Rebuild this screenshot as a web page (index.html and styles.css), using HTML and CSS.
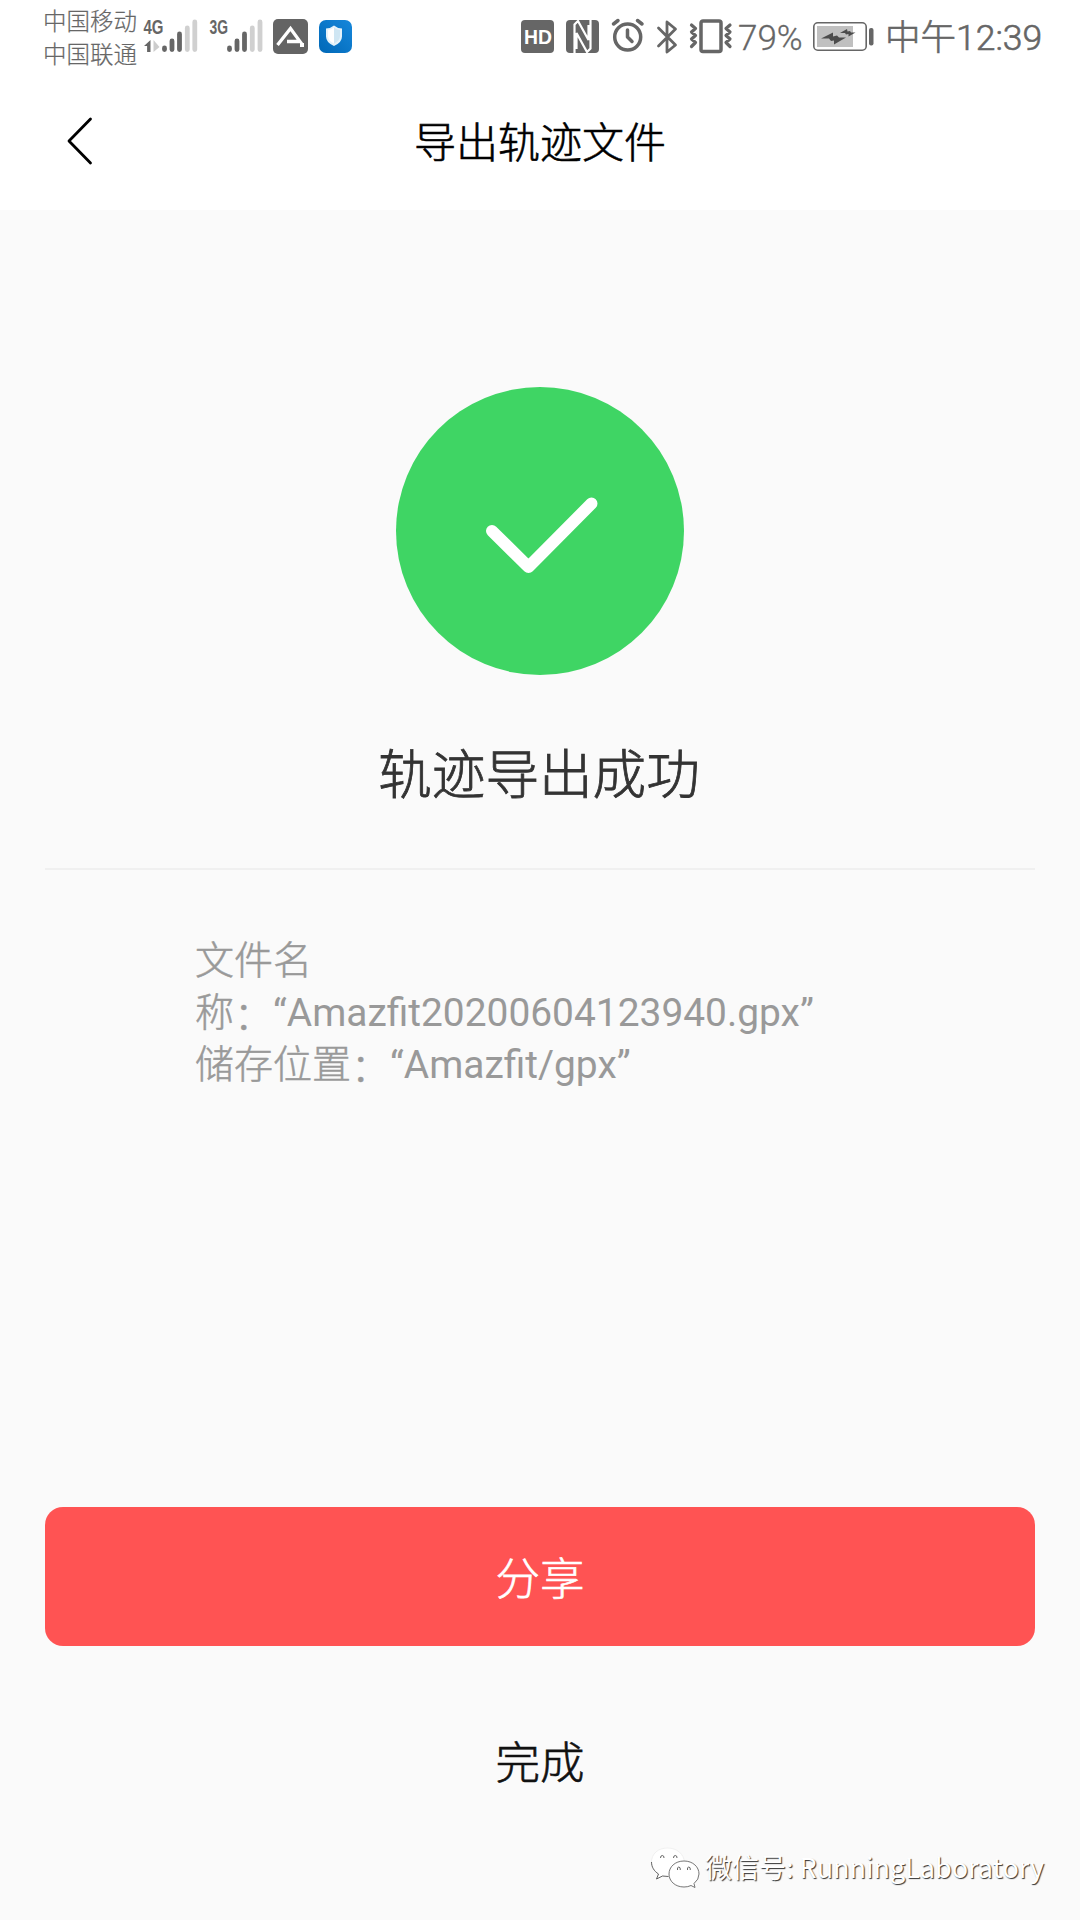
FILE: index.html
```html
<!DOCTYPE html>
<html lang="zh-CN">
<head>
<meta charset="utf-8">
<title>导出轨迹文件</title>
<link rel="stylesheet" href="styles.css">
</head>
<body>
<div class="screen">
  <div class="status-bar">
    <div class="status-left">
      <div class="carriers"><span>中国移动</span><span>中国联通</span></div>
      <svg class="icon-signal" width="56" height="40" viewBox="143 16 56 40">
        <text class="network" x="143.5" y="34" textLength="20" lengthAdjust="spacingAndGlyphs">4G</text>
        <path d="M150.500 40v12h-3.400v-6H144z" fill="#666"/>
        <path d="M153.500 40v12l6-5z" fill="#ccc"/>
        <g stroke="#666" stroke-width="4.800" stroke-linecap="round"><path d="M164.500 48v1.500M172 41v8.500M179.500 34v15.500"/></g>
        <path d="M187.300 28v21.500M194.800 22v27.500" stroke="#d0d0d0" stroke-width="4.800" stroke-linecap="round"/>
      </svg>
      <svg class="icon-signal second" width="56" height="40" viewBox="208 16 56 40">
        <text class="network" x="209.500" y="34" textLength="18.500" lengthAdjust="spacingAndGlyphs">3G</text>
        <path d="M229.500 48v1.500M237 41v8.500M244.500 34v15.500" stroke="#666" stroke-width="4.800" stroke-linecap="round"/>
        <path d="M252.300 28v21.500M260 22v27.500" stroke="#d0d0d0" stroke-width="4.800" stroke-linecap="round"/>
      </svg>
      <svg class="icon-track" width="35" height="35" viewBox="0 0 35 35">
        <rect width="35" height="35" rx="5" fill="#646464"/>
        <path d="M4.500 26 17.500 9.500 27 22.500H14" fill="none" stroke="#fff" stroke-width="3.300"/>
        <rect x="27" y="24" width="4" height="4" fill="#fff"/>
      </svg>
      <svg class="icon-shield" width="33" height="33" viewBox="0 0 33 33">
        <defs><linearGradient id="blue" x1="0" y1="1" x2="1" y2="0"><stop stop-color="#0068b7"/><stop offset="1" stop-color="#1687db"/></linearGradient></defs>
        <rect width="33" height="33" rx="7" fill="url(#blue)"/>
        <path d="M15 5.500q3.500 3 8 3v8q0 6-8 9.500Q7 22.500 7 16.500v-8q4.500 0 8-3z" fill="#e4f2fa"/>
        <path d="M15 7.500v16Q9 20.500 9 16v-6q3.500-.3 6-2.500z" fill="#fff"/>
        <path d="M15 7.500v16q6-3 6-7.500v-6q-3.500-.3-6-2.500z" fill="#cfe6f3"/>
      </svg>
    </div>
    <div class="status-right">
      <svg class="icon-hd" width="33" height="33" viewBox="0 0 33 33">
        <rect width="33" height="33" rx="4" fill="#666"/>
        <text class="hd" x="3" y="24.300" textLength="28" lengthAdjust="spacingAndGlyphs">HD</text>
      </svg>
      <svg class="icon-nfc" width="33" height="33" viewBox="0 0 33 33">
        <rect width="33" height="33" rx="4" fill="#666"/>
        <path d="M8.500 33V4.500L12 1l10.500 19V5M24.500 0v28.500L21 32 10.500 13v16" fill="none" stroke="#fff" stroke-width="2.200"/>
      </svg>
      <svg class="icon-alarm" width="34" height="35" viewBox="0 0 34 35">
        <g fill="none" stroke="#666" stroke-width="3.500" stroke-linecap="round" stroke-linejoin="round"><circle cx="16.700" cy="19" r="13"/><path d="M16.500 12v7l4.500 4.500M2.500 6 7 2.500M31 6l-4.500-3.500"/></g>
      </svg>
      <svg class="icon-bluetooth" width="23" height="36" viewBox="0 0 23 36">
        <path d="m2.500 9 17 17-8.500 7V3l8.500 7-17 17" fill="none" stroke="#666" stroke-width="2.800" stroke-linecap="round" stroke-linejoin="round"/>
      </svg>
      <svg class="icon-vibrate" width="44" height="35" viewBox="0 0 44 35">
        <rect x="12" y="2" width="20" height="30.500" rx="2" fill="none" stroke="#666" stroke-width="3.500"/>
        <path d="m2.500 6 4 3.500-4 3.500 4 3.500-4 3.500 4 3.500-4 4M41 6l-4 3.500 4 3.500-4 3.500 4 3.500-4 3.500 4 4" fill="none" stroke="#666" stroke-width="3.200" stroke-linecap="round" stroke-linejoin="round"/>
      </svg>
      <span class="percent">79%</span>
      <svg class="icon-battery" width="62" height="32" viewBox="811 21 62 32">
        <rect x="812.800" y="22.800" width="52.400" height="27.400" rx="4" fill="#fff" stroke="#666" stroke-width="1.600"/>
        <rect x="816" y="26" width="36" height="21" fill="#c0c0c0"/>
        <rect x="868" y="28" width="4.500" height="17.500" rx="2" fill="#666"/>
        <path d="m820 38.500 12-6v4l4-1 2 2h7l-12 7v-4l-3 .5-2-2.500zM839 33l7-4 .5 2.500 2.500-.5 1 1.500h4.500l-7 4v-2.500l-2.500.5-1-1.500z" fill="#4c4c4c"/>
      </svg>
      <span class="clock">中午12:39</span>
    </div>
  </div>
  <header class="header">
    <svg class="back" width="28" height="50" viewBox="0 0 28 50"><path d="M24.500 3 3 25l21.500 22" fill="none" stroke="#000" stroke-width="2.800" stroke-linecap="round" stroke-linejoin="round"/></svg>
    <h1 class="title">导出轨迹文件</h1>
  </header>
  <main class="content">
    <svg class="success" width="288" height="288" viewBox="0 0 288 288">
      <circle cx="144" cy="144" r="144" fill="#3fd564"/>
      <path d="m96 144 36.500 36 63-63.500" fill="none" stroke="#fff" stroke-width="12" stroke-linecap="round" stroke-linejoin="round"/>
    </svg>
    <h2 class="result">轨迹导出成功</h2>
    <div class="divider"></div>
    <p class="file-info">文件名<br>称<span class="colon">：</span><span class="latin">“Amazfit20200604123940.gpx”</span><br>储存位置<span class="colon">：</span><span class="latin">“Amazfit/gpx”</span></p>
    <div class="actions">
      <button class="button share">分享</button>
      <button class="button done">完成</button>
    </div>
  </main>
  <div class="watermark">
    <svg width="50" height="43" viewBox="0 0 50 43">
      <g fill="none" stroke-width=".9"><path d="M17.500 1C8 1 1.500 7 1.500 15c0 5 2.500 9 7 12l-2 5 6-3q3 1 7 .500 14.500-2 15-14C34 7 27 1 17.500 1z" fill="#fff" stroke="#eee"/>
      <path d="M1.500 15c0 5 2.500 9 7 12l-2 5 6-3 6 .5" stroke="#555"/>
      <path d="M34 14c-9 0-15 6-15 13s6 13 15 13q4 0 7-1.500l4 2-1-4q5-4 5-9.500c0-7-6-13-15-13z" fill="#fff" stroke="#666"/>
      <path d="M10.500 11q0-2.500 1.800-2.500T14 11M23.500 11q0-2.500 1.800-2.500T27 11M27.500 23q-.5-3 1.300-3t1.500 3M37.500 23q-.5-3 1.300-3t1.500 3" stroke="#555"/></g>
    </svg>
    <span class="watermark-text">微信号: RunningLaboratory</span>
  </div>
</div>
</body>
</html>
```
FILE: styles.css
```css
* { box-sizing: border-box; }
body {
  margin: 0;
  font-family: Roboto, "Noto Sans CJK SC", sans-serif;
  font-weight: 300;
  color: #111;
}
svg { display: block; flex: none; }
.screen {
  position: relative;
  display: flex;
  flex-direction: column;
  width: 1080px;
  height: 1920px;
  background: #fafafa;
}
.status-bar {
  display: flex;
  justify-content: space-between;
  height: 74px;
  padding: 0 37px 0 43px;
  background: #fff;
  color: #666;
}
.status-left, .status-right { display: flex; align-items: flex-start; white-space: nowrap; }
.carriers {
  display: flex;
  flex-direction: column;
  width: 95px;
  padding-top: 4px;
  font: 300 23.500px/32.500px "Noto Sans CJK SC", sans-serif;
  -webkit-text-stroke: .2px;
}
.icon-signal { margin: 16px 0 0 5px; }
.icon-signal.second { margin-left: 9px; }
.network { font: bold 19.500px "Liberation Sans", sans-serif; fill: #666; }
.hd { font: bold 21px "Liberation Sans", sans-serif; fill: #fff; }
.icon-track { margin: 19px 0 0 9px; }
.icon-shield { margin: 20px 0 0 11px; }
.icon-hd { margin-top: 20px; }
.icon-nfc { margin: 20px 0 0 12px; }
.icon-alarm { margin: 18px 0 0 12px; }
.icon-bluetooth { margin: 19px 0 0 11px; }
.icon-vibrate { margin: 19px 0 0 10px; }
.percent { width: 65px; margin: 18px 0 0 5px; font-size: 35px; line-height: 41px; -webkit-text-stroke: .3px; }
.icon-battery { margin: 21px 0 0 9px; }
.clock { width: 158px; margin: 18px 0 0 11px; font-size: 35.500px; line-height: 41px; -webkit-text-stroke: .6px; }
.latin { font-weight: 400; -webkit-text-stroke: 0; }
.header {
  display: grid;
  grid-template-columns: 1fr auto 1fr;
  align-items: center;
  height: 136px;
  padding: 0 66px;
  background: #fff;
}
.back { margin-top: -2px; }
.title { grid-column: 2; margin: 3px 0 0; color: #000; font-size: 42px; font-weight: 300; line-height: 60px; -webkit-text-stroke: .6px; }
.content { display: flex; flex: 1; flex-direction: column; align-items: center; padding: 177px 45px 0; }
.result { margin: 61px 2px 0 0; color: #333; font-size: 53.600px; font-weight: 300; line-height: 80px; -webkit-text-stroke: .8px; }
.divider { width: 100%; height: 2px; margin-top: 52px; background: #f0f0f0; }
.file-info { align-self: flex-start; margin: 65px 0 0 150px; color: #999; font-size: 39px; line-height: 52px; white-space: nowrap; -webkit-text-stroke: .5px; }
.file-info .latin { font-size: 38.900px; }
.colon { line-height: 0; vertical-align: -3px; }
.actions { display: flex; flex-direction: column; width: 100%; margin-top: 416px; }
.button { height: 139px; padding: 0 0 3px; border: 0; border-radius: 18px; font: 300 44.500px Roboto, "Noto Sans CJK SC", sans-serif; -webkit-text-stroke: .6px; }
.share { background: #ff5353; color: #fff; }
.done { margin-top: 45px; background: transparent; color: #111; }
.watermark { position: absolute; left: 650px; top: 1847px; display: flex; }
.watermark-text { margin: 0 0 0 5px; color: #fff; font: 400 27px/40px "Noto Sans CJK SC", sans-serif; text-shadow: 1px 1px 1px #333; white-space: nowrap; }
```
